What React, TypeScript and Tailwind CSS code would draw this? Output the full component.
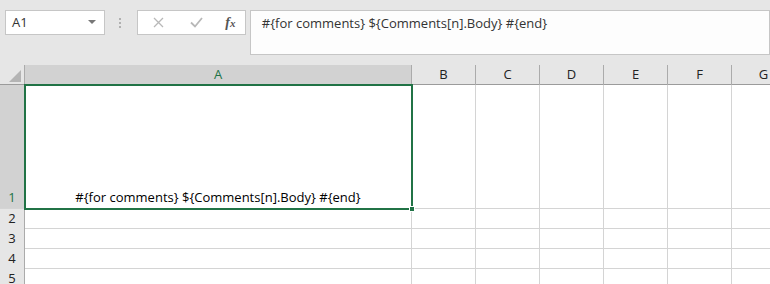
import React from 'react'

const cols = ['B', 'C', 'D', 'E', 'F', 'G']
const rows = [2, 3, 4, 5]
const text = '#{for comments} ${Comments[n].Body} #{end}'

export default function App() {
  return (
    <div className="w-[770px] h-[284px] overflow-hidden bg-[#e6e6e6] font-['Open_Sans',sans-serif]">
      {/* formula bar */}
      <div className="flex items-start pt-[10px] pl-[5px] h-[65px]">
        <div className="flex items-center justify-between w-[102px] h-[25px] bg-white border border-[#c6c6c6] pl-[6px] pr-[8px] text-[13px] text-[#333]">
          <span>A1</span>
          <svg width="8" height="5" viewBox="0 0 8 5">
            <path d="M0 0 L8 0 L4 4 Z" fill="#777" />
          </svg>
        </div>
        <div className="flex flex-col gap-[2px] w-[30px] items-center h-[25px] justify-center">
          <div className="w-[2px] h-[2px] bg-[#b0b0b0]" />
          <div className="w-[2px] h-[2px] bg-[#b0b0b0]" />
          <div className="w-[2px] h-[2px] bg-[#b0b0b0]" />
        </div>
        <div className="ml-[2px] flex items-center w-[109px] h-[25px] bg-white border border-[#c6c6c6]">
          <span className="w-[40px] flex justify-center pl-[2px]">
            <svg width="11" height="11" viewBox="0 0 11 11">
              <path d="M1 1 L10 10 M10 1 L1 10" stroke="#b8b8b8" strokeWidth="1.3" />
            </svg>
          </span>
          <span className="w-[38px] flex justify-center">
            <svg width="13" height="11" viewBox="0 0 13 11">
              <path d="M1 5.5 L5 9.5 L12 1" stroke="#b8b8b8" strokeWidth="1.8" fill="none" />
            </svg>
          </span>
          <span className="w-[29px] flex justify-center items-baseline text-[14px] italic font-semibold font-['Liberation_Serif',serif] text-[#555]">
            f<span className="text-[11px]">x</span>
          </span>
        </div>
        <div className="ml-[4px] w-[530px] h-[45px] bg-[#fdfdfd] border border-[#c6c6c6] pl-[11px] pt-[3px] text-[13px] text-[#333]">
          {text}
        </div>
      </div>

      {/* grid */}
      <div className="relative">
        <div className="grid grid-cols-[25px_387px_repeat(6,64px)] h-[20px] border-b border-[#9b9b9b] text-[13px]">
          <div className="relative border-r border-[#ababab]">
            <svg className="absolute right-[3px] bottom-[3px]" width="12" height="12" viewBox="0 0 12 12">
              <path d="M12 0 L12 12 L0 12 Z" fill="#b4b4b4" />
            </svg>
          </div>
          <div className="flex items-center justify-center bg-[#d2d2d2] border-r border-[#ababab] text-[#217346]">A</div>
          {cols.map((c) => (
            <div key={c} className="flex items-center justify-center border-r border-[#ababab] text-[#222]">
              {c}
            </div>
          ))}
        </div>

        <div className="grid grid-cols-[25px_387px_repeat(6,64px)] h-[124px] border-b border-[#d4d4d4] bg-white">
          <div className="flex items-end justify-center pb-[1px] bg-[#d2d2d2] border-r border-[#ababab] text-[13px] text-[#217346]">1</div>
          <div className="flex items-end justify-center pb-[1px] border-r border-[#d4d4d4] text-[13px] text-black">{text}</div>
          {cols.map((c) => (
            <div key={c} className="border-r border-[#d4d4d4]" />
          ))}
        </div>

        {rows.map((r) => (
          <div key={r} className="grid grid-cols-[25px_387px_repeat(6,64px)] h-[20px] border-b border-[#d4d4d4] bg-white">
            <div className="flex items-center justify-center bg-[#e6e6e6] border-r border-[#ababab] text-[13px] text-[#222]">{r}</div>
            <div className="border-r border-[#d4d4d4]" />
            {cols.map((c) => (
              <div key={c} className="border-r border-[#d4d4d4]" />
            ))}
          </div>
        ))}

        {/* selection */}
        <div className="absolute left-[24px] top-[19px] w-[389px] h-[126px] border-2 border-[#217346] pointer-events-none" />
        <div className="absolute left-[409px] top-[141px] w-[6px] h-[6px] bg-[#217346] border border-white" />
      </div>
    </div>
  )
}
